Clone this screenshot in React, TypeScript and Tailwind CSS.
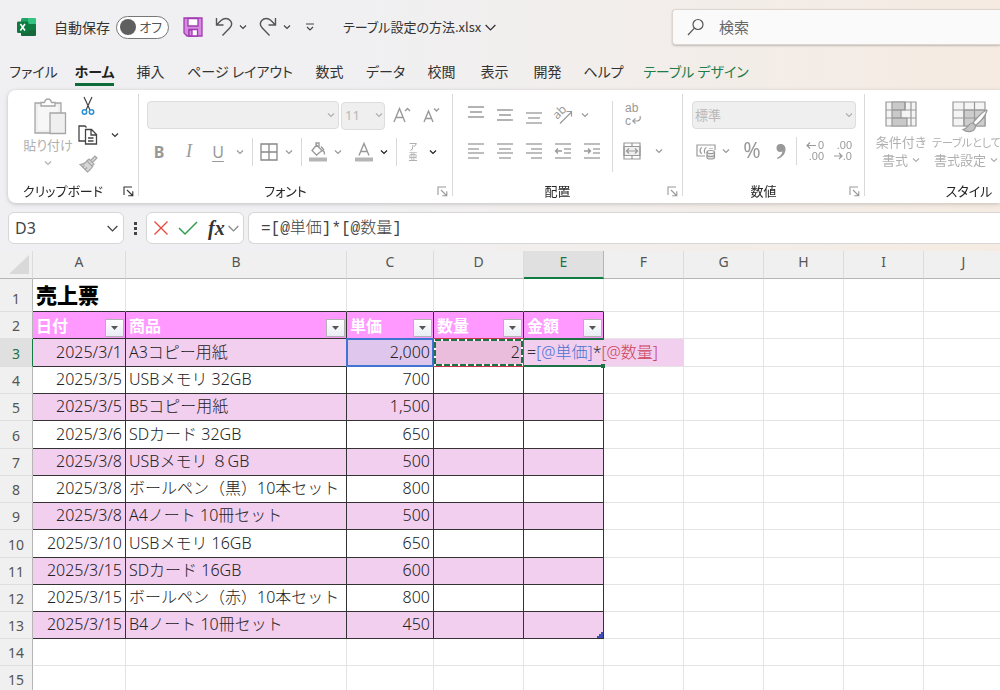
import React from 'react';
import clsx from 'clsx';

type Tab = { name: string; width: string; active?: boolean; contextual?: boolean };

type SheetRow = { no: number; date: string; item: string; price: string; qty?: string; tall?: boolean };

const tabs: Tab[] = [
  { name: 'ファイル', width: 'w-[63px]' },
  { name: 'ホーム', width: 'w-[59px]', active: true },
  { name: '挿入', width: 'w-[53px]' },
  { name: 'ページ レイアウト', width: 'w-[126px]' },
  { name: '数式', width: 'w-[53px]' },
  { name: 'データ', width: 'w-[59px]' },
  { name: '校閲', width: 'w-[53px]' },
  { name: '表示', width: 'w-[53px]' },
  { name: '開発', width: 'w-[53px]' },
  { name: 'ヘルプ', width: 'w-[59px]' },
  { name: 'テーブル デザイン', width: 'w-[126px]', contextual: true },
];

const columns = ['A', 'B', 'C', 'D', 'E', 'F', 'G', 'H', 'I', 'J'];

const fields = ['日付', '商品', '単価', '数量', '金額'];

const rows: SheetRow[] = [
  { no: 3, date: '2025/3/1', item: 'A3コピー用紙', price: '2,000', qty: '2', tall: true },
  { no: 4, date: '2025/3/5', item: 'USBメモリ 32GB', price: '700' },
  { no: 5, date: '2025/3/5', item: 'B5コピー用紙', price: '1,500' },
  { no: 6, date: '2025/3/6', item: 'SDカード 32GB', price: '650', tall: true },
  { no: 7, date: '2025/3/8', item: 'USBメモリ ８GB', price: '500' },
  { no: 8, date: '2025/3/8', item: 'ボールペン（黒）10本セット', price: '800' },
  { no: 9, date: '2025/3/8', item: 'A4ノート 10冊セット', price: '500' },
  { no: 10, date: '2025/3/10', item: 'USBメモリ 16GB', price: '650', tall: true },
  { no: 11, date: '2025/3/15', item: 'SDカード 16GB', price: '600' },
  { no: 12, date: '2025/3/15', item: 'ボールペン（赤）10本セット', price: '800' },
  { no: 13, date: '2025/3/15', item: 'B4ノート 10冊セット', price: '450' },
];

const Chevron: React.FC<{ className?: string; size?: number }> = ({ className, size = 8 }) => (
  <svg width={size} height={size} viewBox="0 0 8 8" fill="none" stroke="currentColor" strokeWidth={size > 8 ? 0.8 : 1.2} className={clsx('shrink-0', className)}>
    <path d="M1 2.5 4 5.5 7 2.5" />
  </svg>
);

type ToolProps = {
  label: string;
  className?: string;
  children: React.ReactNode;
};

const Tool: React.FC<ToolProps> = ({ label, className, children }) => (
  <button type="button" aria-label={label} className={clsx('flex h-7 shrink-0 items-center justify-center', className)}>
    {children}
  </button>
);

const More: React.FC<{ label: string; className?: string }> = ({ label, className }) => (
  <Tool label={label} className={clsx('w-4', className)}>
    <Chevron />
  </Tool>
);

const Divider = () => <span className="mx-1 h-7 w-px shrink-0 bg-[#d9d9d9]" />;

const GroupDivider = () => <span className="mt-1 mb-[7px] w-px shrink-0 bg-[#d9d9d9]" />;

type GroupProps = {
  name: string;
  width: string;
  launcher?: string;
  children: React.ReactNode;
};

const Group: React.FC<GroupProps> = ({ name, width, launcher, children }) => (
  <section className={clsx('flex shrink-0 flex-col', width)}>
    <div className="h-[89px]">{children}</div>
    <div className="flex h-6 items-center text-[#262626]">
      <h2 className="flex-1 text-center text-[13px] leading-5">{name}</h2>
      {launcher && (
        <button type="button" aria-label={`${name}の設定`} className={clsx('flex w-5 justify-center', launcher)}>
          <svg width="11" height="11" viewBox="0 0 11 11" fill="none" stroke="currentColor" strokeWidth="1.1">
            <path d="M1 9V1h8M4 4l5.5 5.5M9.8 5.2v4.6H5.2" />
          </svg>
        </button>
      )}
    </div>
  </section>
);

// horizontal strokes given as [x, y, length]
const Lines: React.FC<{ strokes: number[][]; children?: React.ReactNode }> = ({ strokes, children }) => (
  <svg width="18" height="20" viewBox="0 0 18 20" fill="none" stroke="currentColor" strokeWidth="1.3">
    {strokes.map(([x, y, w]) => (
      <path key={y} d={`M${x} ${y}h${w}`} />
    ))}
    {children}
  </svg>
);

const TitleBar = () => (
  <header className="flex h-[54px] items-center">
    <svg width="20" height="20" viewBox="0 0 20 20" className="ml-[17px] shrink-0">
      <rect x="4" y="1" width="15" height="18" rx="1.5" fill="#21a366" />
      <path d="M11 1h6.5A1.5 1.5 0 0 1 19 2.500V7h-8z" fill="#33c481" />
      <path d="M11 7h8v6h-8z" fill="#107c41" />
      <path d="M4 7h7v6H4z" fill="#185c37" />
      <path d="M4 13h15v4.500a1.500 1.500 0 0 1-1.500 1.500h-12A1.500 1.500 0 0 1 4 17.500z" fill="#17693c" />
      <rect x="0" y="4.500" width="11.500" height="11.500" rx="1.300" fill="#0f7a40" />
      <path d="M3.400 7l4.600 6.500M8 7l-4.600 6.500" stroke="#fff" strokeWidth="1.600" />
    </svg>
    <label className="ml-[17px] flex shrink-0 items-center gap-[6px] text-[14px] text-[#333]">
      自動保存
      <input type="checkbox" role="switch" className="peer sr-only" />
      <span className="flex h-[23px] w-[53px] items-center justify-between rounded-full border border-[#777] bg-white pr-[6px] pl-[3px] text-[13px] text-[#555]">
        <span className="size-4 rounded-full bg-[#5f5f5f]" />
        オフ
      </span>
    </label>
    <button type="button" aria-label="上書き保存" className="ml-[14px]">
      <svg width="20" height="20" viewBox="0 0 20 20" fill="#d48be0" stroke="#a33bb3" strokeWidth="1.300">
        <path d="M1 1h18v18H4l-3-3z" />
        <path d="M5 1.500h10V9H5z" fill="#fff" />
        <path d="M6 12.500h8.500V19H6z" fill="#fff" />
        <path d="M6 13h3v6H6z" />
      </svg>
    </button>
    <button type="button" aria-label="元に戻す" className="ml-3 text-[#555]">
      <svg width="18" height="20" viewBox="0 0 18 20" fill="none" stroke="currentColor" strokeWidth="1.400">
        <path d="M1.500 1v7h7M1.800 7.700 6 3.500C9 .8 13 1 15 3.300c2.200 2.400 1.800 5.500-.3 7.700L7.500 18.500" />
      </svg>
    </button>
    <button type="button" aria-label="元に戻す履歴" className="ml-[6px] text-[#444]">
      <Chevron />
    </button>
    <button type="button" aria-label="やり直し" className="ml-3 text-[#555]">
      <svg width="18" height="20" viewBox="0 0 18 20" fill="none" stroke="currentColor" strokeWidth="1.400">
        <path d="M16.500 1v7h-7M16.200 7.700 12 3.500C9 .8 5 1 3 3.300.8 5.700 1.200 8.800 3.300 11l7.200 7.500" />
      </svg>
    </button>
    <button type="button" aria-label="やり直し履歴" className="ml-[6px] text-[#444]">
      <Chevron />
    </button>
    <button type="button" aria-label="クイック アクセス ツール バーのカスタマイズ" className="ml-[14px] text-[#444]">
      <svg width="10" height="10" viewBox="0 0 10 10" fill="none" stroke="currentColor" strokeWidth="1.200">
        <path d="M1 2h8M2 5l3 3 3-3" />
      </svg>
    </button>
    <button type="button" className="ml-[28px] flex w-[154px] shrink-0 items-center justify-between text-[13px] whitespace-nowrap text-[#333]">
      テーブル設定の方法.xlsx
      <Chevron size={13} />
    </button>
    <label className="ml-[175px] flex h-9 flex-1 items-center gap-[14px] rounded-l border border-r-0 border-[#ddd5d0] bg-[#fbfafa] pl-[14px] text-[#555] shadow-[0_1px_2px_rgba(0,0,0,0.22)]">
      <svg width="18" height="18" viewBox="0 0 18 18" fill="none" stroke="currentColor" strokeWidth="1.200" className="shrink-0">
        <circle cx="11" cy="6.500" r="5" />
        <path d="M7.400 10.200 1 17" />
      </svg>
      <input type="search" aria-label="検索" placeholder="検索" className="w-full min-w-0 bg-transparent text-[15px] outline-none placeholder:text-[#666]" />
    </label>
  </header>
);

const TabBar = () => (
  <nav className="flex h-9 pl-[2px] text-[14px] text-[#333]">
    {tabs.map((tab) => (
      <a
        key={tab.name}
        href="#"
        className={clsx(
          'flex shrink-0 justify-center whitespace-nowrap',
          tab.width,
          tab.active && 'font-bold text-[#222]',
          tab.contextual && 'text-[#1d7c48]'
        )}
      >
        <span className={clsx('h-8 border-b-3 leading-[35px]', tab.active ? 'border-[#0f6b37]' : 'border-transparent')}>{tab.name}</span>
      </a>
    ))}
  </nav>
);

const ClipboardGroup = () => (
  <Group name="クリップボード" width="w-[130px]" launcher="text-[#333]">
    <div className="flex pt-[2px] pl-[13px] text-[#a6a6a6]">
      <button type="button" className="mt-[6px] flex w-[54px] flex-col items-center text-[13px] leading-5 whitespace-nowrap text-[#b0b0b0]">
        <svg width="34" height="37" viewBox="0 0 34 37" fill="#efefef" stroke="#a6a6a6" strokeWidth="1.300" className="ml-1">
          <path d="M2 5h26v30H2z" />
          <path d="M5 8h20v24H5z" fill="#f7f7f7" stroke="none" />
          <path d="M8 8V4.500h3.500C12 2 13.500 1 15 1s3 1 3.500 3.500H22V8z" fill="#fff" />
          <path d="M17 15h15.500v20.500H17z" />
        </svg>
        貼り付け
        <Chevron className="mt-1" />
      </button>
      <div className="ml-px flex flex-col gap-px">
        <Tool label="切り取り" className="w-6">
          <svg width="14" height="20" viewBox="0 0 14 20" fill="none" stroke="#444" strokeWidth="1.200">
            <path d="M3 1l6 13M11 1 5 14" />
            <circle cx="3.500" cy="16" r="2.200" stroke="#2e8fd0" strokeWidth="1.500" />
            <circle cx="10.500" cy="16" r="2.200" stroke="#2e8fd0" strokeWidth="1.500" />
          </svg>
        </Tool>
        <Tool label="コピー" className="w-6">
          <svg width="20" height="20" viewBox="0 0 20 20" fill="none" stroke="#444" strokeWidth="1.300">
            <path d="M7 16H1V1h6l1.500 1.500M7.500 4.500h6l5 5V19h-11zM13 4.500V10h5.500M10 13h5.500M10 16h5.500" />
          </svg>
        </Tool>
        <Tool label="書式のコピー/貼り付け" className="w-6">
          <svg width="19" height="18" viewBox="0 0 19 18" fill="#d6d6d6" stroke="currentColor" strokeWidth="1.200">
            <path d="M1 9.500c2.500 0 5-1 7.500-4L14 11c-2 3-4 5-5.500 6z" />
            <path d="M8 6l2-2 5 5-2 2zM11.500 5.500l4.500-4.500 2 2-4.500 4.500M3.500 12l2-1.500M6 14.500l2-2" />
          </svg>
        </Tool>
      </div>
      <More label="コピーのオプション" className="mt-[29px] ml-[7px] text-[#333]" />
    </div>
  </Group>
);

const FontGroup = () => (
  <Group name="フォント" width="w-[313px]" launcher="text-[#999]">
    <div className="flex flex-col gap-2 pt-[11px] pl-[5px] text-[#999]">
      <div className="flex pl-[3px]">
        <div className="relative w-48">
          <select aria-label="フォント名" className="h-7 w-full appearance-none rounded border border-[#ddd] bg-[#efefef]" />
          <Chevron className="absolute top-[10px] right-1 text-[#b0b0b0]" />
        </div>
        <div className="relative ml-[2px] w-11">
          <select aria-label="フォント サイズ" className="h-7 w-full appearance-none rounded border border-[#ddd] bg-[#efefef] pl-[3px] font-['Noto_Sans',sans-serif] text-[13px] text-[#b8b8b8]">
            <option>11</option>
          </select>
          <Chevron className="absolute top-[10px] right-[2px] text-[#b0b0b0]" />
        </div>
        <Tool label="フォント サイズの拡大" className="ml-[2px] w-[29px]">
          <svg width="18" height="18" viewBox="0 0 18 18" fill="none" stroke="currentColor" strokeWidth="1.400">
            <path d="M1 16 6.500 2.500 12 16M3 11.500h7M12 5l2.500-2.500L17 5" />
          </svg>
        </Tool>
        <Tool label="フォント サイズの縮小" className="w-[29px]">
          <svg width="18" height="18" viewBox="0 0 18 18" fill="none" stroke="currentColor" strokeWidth="1.400">
            <path d="M2 16 6.500 5 11 16M3.500 12.500h6M12 2.500 14.500 5 17 2.500" />
          </svg>
        </Tool>
      </div>
      <div className="flex font-['Noto_Sans',sans-serif] text-[16px]">
        <Tool label="太字" className="w-[30px] font-bold">B</Tool>
        <Tool label="斜体" className="w-[30px] font-['Liberation_Serif',serif] text-[18px] italic">I</Tool>
        <Tool label="下線" className="w-7 underline underline-offset-3">U</Tool>
        <More label="下線の種類" />
        <Divider />
        <Tool label="罫線" className="w-6">
          <svg width="18" height="18" viewBox="0 0 18 18" fill="none" stroke="#888" strokeWidth="1.300">
            <path d="M1 1h16v16H1zM9 1v16M1 9h16" />
          </svg>
        </Tool>
        <More label="罫線の種類" />
        <Divider />
        <Tool label="塗りつぶしの色" className="w-6">
          <svg width="20" height="20" viewBox="0 0 20 20" fill="none" stroke="currentColor" strokeWidth="1.300">
            <path d="M8.500 3 14 8.500 8.500 13 4 8.500zM8 3.500V1h3v4.500M14 8.500c1.500 0 2.500 1.500 2.500 4M13 4.500l3 3.500" />
            <path d="M1 17.500h18" stroke="#b5b5b5" strokeWidth="4" />
          </svg>
        </Tool>
        <More label="塗りつぶしの色の選択" />
        <Tool label="フォントの色" className="ml-[6px] w-6">
          <svg width="20" height="20" viewBox="0 0 20 20" fill="none" stroke="currentColor" strokeWidth="1.400">
            <path d="M5 13.500 10 1.500l5 12M6.800 9.500h6.400" />
            <path d="M1 17.500h18" stroke="#b5b5b5" strokeWidth="4" />
          </svg>
        </Tool>
        <More label="フォントの色の選択" className="text-[#222]" />
        <Divider />
        <Tool label="ふりがなの表示/非表示" className="w-6">
          <span className="w-[10px] font-['Noto_Sans_CJK_JP',sans-serif] text-[9px] leading-[10px] break-all [font-feature-settings:normal]">ア亜</span>
        </Tool>
        <More label="ふりがなのオプション" className="text-[#222]" />
      </div>
    </div>
  </Group>
);

const AlignGroup = () => (
  <Group name="配置" width="w-[229px]" launcher="text-[#999]">
    <div className="flex pt-[11px] pl-2 text-[#999]">
      <div className="flex w-[151px] flex-col gap-2">
        <div className="flex">
          <Tool label="上揃え" className="w-[29px]">
            <Lines strokes={[[1, 2, 16], [3, 7, 12], [1, 12, 16]]} />
          </Tool>
          <Tool label="上下中央揃え" className="w-[29px]">
            <Lines strokes={[[1, 5, 16], [3, 10, 12], [1, 15, 16]]} />
          </Tool>
          <Tool label="下揃え" className="w-[29px]">
            <Lines strokes={[[1, 8, 16], [3, 13, 12], [1, 18, 16]]} />
          </Tool>
          <Tool label="方向" className="w-[29px]">
            <svg width="20" height="20" viewBox="0 0 20 20" fill="none" stroke="currentColor" strokeWidth="1.200" className="overflow-visible">
              <text x="7" y="11" textAnchor="middle" transform="rotate(-45 7 8)" fill="currentColor" stroke="none" className="font-['Noto_Sans',sans-serif] text-[12px]">ab</text>
              <path d="M7 18.500 18.500 7M13.500 6.500h5v5" />
            </svg>
          </Tool>
          <More label="方向のオプション" className="w-3" />
        </div>
        <div className="flex">
          <Tool label="左揃え" className="w-[29px]">
            <Lines strokes={[[1, 3, 16], [1, 8, 11], [1, 12, 16], [1, 17, 11]]} />
          </Tool>
          <Tool label="中央揃え" className="w-[29px]">
            <Lines strokes={[[1, 3, 16], [3, 8, 12], [1, 12, 16], [3, 17, 12]]} />
          </Tool>
          <Tool label="右揃え" className="w-[29px]">
            <Lines strokes={[[1, 3, 16], [6, 8, 11], [1, 12, 16], [6, 17, 11]]} />
          </Tool>
          <Tool label="インデントを減らす" className="w-[29px]">
            <Lines strokes={[[1, 3, 16], [10, 8, 7], [10, 12, 7], [1, 17, 16]]}>
              <path d="M8 10H1.500M4 7.500 1.500 10 4 12.500" />
            </Lines>
          </Tool>
          <Tool label="インデントを増やす" className="w-[29px]">
            <Lines strokes={[[1, 3, 16], [10, 8, 7], [10, 12, 7], [1, 17, 16]]}>
              <path d="M1 10h6.500M5 7.500 7.500 10 5 12.500" />
            </Lines>
          </Tool>
        </div>
      </div>
      <div className="flex h-[71px] flex-col gap-2 border-l border-[#d9d9d9]">
        <Tool label="折り返して全体を表示する" className="w-10">
          <svg width="18" height="24" viewBox="0 0 18 24" fill="none" stroke="currentColor" strokeWidth="1.200" className="overflow-visible">
            <g fill="currentColor" stroke="none" className="font-['Liberation_Sans',sans-serif] text-[12px]">
              <text x="1" y="9">ab</text>
              <text x="1" y="22">c</text>
            </g>
            <path d="M16 13c1 3-.5 5-3 5H9M11.500 15.300 8.800 18l2.700 2.700" />
          </svg>
        </Tool>
        <div className="flex">
          <Tool label="セルを結合して中央揃え" className="w-[38px]">
            <svg width="18" height="18" viewBox="0 0 18 18" fill="none" stroke="currentColor" strokeWidth="1.200">
              <path d="M1 4.500h16v9H1z" fill="#f0f0f0" />
              <path d="M1 1h16v16H1zM9 1v3.500M9 13.500V17M3.500 9h11M6 6.500 3.500 9 6 11.500M12 6.500 14.500 9 12 11.500" />
            </svg>
          </Tool>
          <More label="結合のオプション" />
        </div>
      </div>
    </div>
  </Group>
);

const DecimalIcon: React.FC<{ decrease?: boolean }> = ({ decrease }) => (
  <svg width="20" height="22" viewBox="0 0 20 22" fill="none" stroke="currentColor" strokeWidth="1.200" className="overflow-visible">
    <g fill="currentColor" stroke="none" textAnchor="end" className="font-['Liberation_Sans',sans-serif] text-[11px]">
      <text x="19" y="9">{decrease ? '.00' : '0'}</text>
      <text x="19" y="20">{decrease ? '.0' : '.00'}</text>
    </g>
    {decrease ? <path d="M1 16h8M6 13l3 3-3 3" /> : <path d="M11 5.500H2M5 2.500l-3 3 3 3" />}
  </svg>
);

const NumberGroup = () => (
  <Group name="数値" width="w-[181px]" launcher="text-[#999]">
    <div className="flex flex-col gap-2 pt-[11px] pl-[9px] text-[#999]">
      <div className="relative w-[164px]">
        <select aria-label="表示形式" className="h-7 w-full appearance-none rounded border border-[#ddd] bg-[#efefef] pl-[2px] text-[13px] text-[#b8b8b8]">
          <option>標準</option>
        </select>
        <Chevron className="absolute top-[10px] right-[3px] text-[#b0b0b0]" />
      </div>
      <div className="flex pl-[2px]">
        <Tool label="通貨表示形式" className="w-6">
          <svg width="20" height="18" viewBox="0 0 20 18" fill="none" stroke="currentColor" strokeWidth="1.200">
            <path d="M9 14H1V3h18v5M6 5.500C3.500 6 3.500 11 6 11.500M10.500 5.500C8 6 8 10.500 9 11.500M14 6v1M16 6v1" />
            <path d="M11 10v5.500c0 2 7.500 2 7.500 0V10" fill="#e6e6e6" />
            <ellipse cx="14.750" cy="10" rx="3.750" ry="1.500" fill="#fff" />
            <path d="M11 13c0 2 7.500 2 7.500 0" />
          </svg>
        </Tool>
        <More label="通貨の種類" />
        <Tool label="パーセント スタイル" className="w-9 font-['Noto_Sans',sans-serif] text-[21px]">%</Tool>
        <Tool label="桁区切りスタイル" className="w-[22px]">
          <svg width="10" height="15" viewBox="0 0 10 15" fill="currentColor">
            <path d="M4.500 0a4 4 0 0 0 0 8c.8 0 1.500-.2 2-.5C6 10.500 4 12.500 1 13.800l.4 1.200C6.500 13.500 9.500 9.500 9.500 5c0-3-2-5-5-5z" />
          </svg>
        </Tool>
        <Divider />
        <Tool label="小数点以下の表示桁数を増やす" className="w-7">
          <DecimalIcon />
        </Tool>
        <Tool label="小数点以下の表示桁数を減らす" className="w-7">
          <DecimalIcon decrease />
        </Tool>
      </div>
    </div>
  </Group>
);

const StyleGroup = () => (
  <Group name="スタイル" width="w-52">
    <div className="flex pt-[11px] pl-[5px] text-[13px] leading-[18px] whitespace-nowrap text-[#b0b0b0]">
      <button type="button" className="flex w-[62px] flex-col items-center">
        <svg width="32" height="26" viewBox="0 0 32 26" fill="none" stroke="#999" strokeWidth="1.200" className="mb-[6px]">
          <path d="M1 1h30v24H1z" fill="#f4f4f4" />
          <path d="M7 1h13v8H7zM7 9h9v8H7zM7 17h15v8H7z" fill="#c9c9c9" />
          <path d="M1 9h30M1 17h30M26 1v24M20 1v8" />
        </svg>
        <span>条件付き</span>
        <span className="flex items-center gap-1">書式<Chevron /></span>
      </button>
      <button type="button" className="flex flex-col items-start">
        <svg width="36" height="32" viewBox="0 0 36 32" fill="none" stroke="#999" strokeWidth="1.200" className="ml-5">
          <path d="M1 1h32v24H1z" fill="#f4f4f4" />
          <path d="M12 9h21v16H12z" fill="#cdcdcd" />
          <path d="M1 9h32M1 17h32M12 1v24M22.500 1v24" />
          <path d="M34.500 9c-4 2-11 9-13.500 13l2.500 2.500C28 21 33.500 14.500 35 9.500z" fill="#fff" />
          <path d="M21 22c-5-.5-4 5.500-10 6.500 4 3.500 12.500 3 12.500-4z" fill="#c4c4c4" />
        </svg>
        <span className="text-[11px]">テーブルとして</span>
        <span className="flex items-center gap-1 pl-[2px]">書式設定<Chevron /></span>
      </button>
    </div>
  </Group>
);

const Ribbon = () => (
  <div className="ml-2 flex h-[113px] shrink-0 overflow-hidden rounded-l-lg bg-white">
    <ClipboardGroup />
    <GroupDivider />
    <FontGroup />
    <GroupDivider />
    <AlignGroup />
    <GroupDivider />
    <NumberGroup />
    <GroupDivider />
    <StyleGroup />
  </div>
);

const FormulaBar = () => (
  <div className="mt-[9px] mb-[7px] flex h-8 shrink-0 pl-2">
    <div className="relative w-[116px]">
      <select aria-label="名前ボックス" className="h-8 w-full appearance-none rounded-md border border-[#d6d6d6] bg-white pl-[6px] font-['Noto_Sans',sans-serif] text-[16px] text-[#444]">
        <option>D3</option>
      </select>
      <Chevron size={13} className="absolute top-[10px] right-[5px] text-[#444]" />
    </div>
    <div className="flex w-[22px] flex-col items-center justify-center gap-[2px]">
      <span className="size-[3px] bg-[#444]" />
      <span className="size-[3px] bg-[#444]" />
      <span className="size-[3px] bg-[#444]" />
    </div>
    <div className="flex w-[98px] items-center rounded-md border border-[#d6d6d6] bg-white">
      <button type="button" aria-label="キャンセル" className="ml-[6px]">
        <svg width="16" height="16" viewBox="0 0 16 16" stroke="#e8453c" strokeWidth="1.300">
          <path d="M1.500 1.500l13 13M14.500 1.500l-13 13" />
        </svg>
      </button>
      <button type="button" aria-label="入力" className="ml-[9px]">
        <svg width="20" height="16" viewBox="0 0 20 16" fill="none" stroke="#2f9e4f" strokeWidth="1.500">
          <path d="M1 8l6 6L19 2" />
        </svg>
      </button>
      <button type="button" aria-label="関数の挿入" className="ml-[10px] flex items-center gap-[3px] text-[#333]">
        <span className="w-[16px] font-['Liberation_Serif',serif] text-[20px] leading-6 font-bold italic">fx</span>
        <Chevron size={13} className="text-[#888]" />
      </button>
    </div>
    <input
      type="text"
      aria-label="数式バー"
      defaultValue="=[@単価]*[@数量]"
      className="ml-1 min-w-0 flex-1 rounded-l-md border border-r-0 border-[#d6d6d6] bg-white pt-[2px] pl-3 font-['Liberation_Mono','Noto_Sans_CJK_JP',monospace] text-[16px] font-light text-[#444] outline-none"
    />
  </div>
);

const RowHeader: React.FC<{ no: number; active?: boolean }> = ({ no, active }) => (
  <th
    scope="row"
    className={clsx(
      "border-r border-b border-b-[#dedede] pt-[2px] pb-0 align-bottom text-[14px] leading-6 font-normal",
      active ? 'border-r-[#107c41] bg-[#e0e0e0] text-[#217346]' : 'border-r-[#b5b5b5] bg-[#f0f0f0] text-[#555]'
    )}
  >
    {no}
  </th>
);

// empty grid cells; the last ones of a row run to the sheet's edge
const Blanks: React.FC<{ count: number }> = ({ count }) => (
  <>
    {Array.from({ length: count }, (_, i) => (
      <td key={i} className="border-r border-b border-[#e4e4e4]" />
    ))}
  </>
);

const FormulaEditor: React.FC<{ filled: string }> = ({ filled }) => (
  <div className={clsx('absolute inset-y-0 left-0 z-10 flex w-[160px] items-center pb-[2px] pl-[3px]', filled)}>
    <span className="text-[#333]">=</span>
    <span className="text-[#4a74cf]">[@単価]</span>
    <span className="text-[#333]">*</span>
    <span className="text-[#cc4458]">[@数量]</span>
    <span className="absolute -top-px left-0 h-[2px] w-20 bg-[#1e7145]" />
    <span className="absolute -bottom-px left-0 h-[2px] w-20 bg-[#1e7145]" />
    <span className="absolute -bottom-[2px] left-[77px] size-1 bg-[#1e7145]" />
  </div>
);

const Sheet = () => (
  <div className="min-h-0 flex-1 overflow-hidden bg-white">
    <table className="w-[1004px] table-fixed border-separate border-spacing-0 font-['Noto_Sans','Noto_Sans_CJK_JP',sans-serif] text-[16px] leading-5 font-light whitespace-nowrap text-[#222]">
      <colgroup>
        <col className="w-[33px]" />
        <col className="w-[93px]" />
        <col className="w-[221px]" />
        <col className="w-[87px]" />
        <col className="w-[90px]" />
        <col span={6} className="w-20" />
      </colgroup>
      <thead>
        <tr className="h-7 bg-[#f0f0f0] text-[14px] text-[#555]">
          <td className="border-r border-b border-r-[#dcdcdc] border-b-[#b5b5b5]">
            <svg width="21" height="20" viewBox="0 0 21 20" fill="#d9d9d9" className="ml-[9px]">
              <path d="M20 0v19H0z" />
            </svg>
          </td>
          {columns.map((column) => (
            <th
              key={column}
              scope="col"
              className={clsx(
                'border-r pt-0 font-normal',
                column === 'E'
                  ? 'border-b-2 border-r-[#b5b5b5] border-b-[#107c41] bg-[#e0e0e0] pb-[5px] text-[#217346]'
                  : 'border-b border-r-[#dcdcdc] border-b-[#b5b5b5] pb-[6px]'
              )}
            >
              {column}
            </th>
          ))}
        </tr>
      </thead>
      <tbody>
        <tr className="h-[33px]">
          <RowHeader no={1} />
          <td className="border-r border-b border-r-[#e4e4e4] border-b-[#333] pb-[3px] pl-[3px] font-['Noto_Sans_CJK_JP',sans-serif] text-[21px] font-black text-black">売上票</td>
          {['B', 'C', 'D', 'E'].map((column) => (
            <td key={column} className="border-r border-b border-r-[#e4e4e4] border-b-[#333]" />
          ))}
          <Blanks count={5} />
        </tr>
        <tr className="h-[27px]">
          <RowHeader no={2} />
          {fields.map((field) => (
            <td key={field} className="border-r border-b border-[#333] bg-[#ff99ff] p-0">
              <div className="flex items-end justify-between pl-[3px] font-['Noto_Sans_CJK_JP',sans-serif] font-bold text-white">
                <span className="leading-6">{field}</span>
                <button type="button" aria-label={`${field}のフィルター`} className="mt-[6px] mr-px flex h-[18px] w-[19px] items-center justify-center border border-[#b3b3b3] bg-linear-to-b from-white to-[#e9eef5]">
                  <svg width="7" height="4" viewBox="0 0 7 4" fill="#555">
                    <path d="M0 0h7L3.500 4z" />
                  </svg>
                </button>
              </div>
            </td>
          ))}
          <Blanks count={5} />
        </tr>
        {rows.map((row) => {
          const banded = row.no % 2 === 1;
          const editing = row.no === 3;
          const cell = clsx('relative border-r border-b border-[#333] px-[3px] pt-0 pb-[2px]', banded && 'bg-[#f2ceef]');
          return (
            <tr key={row.no} className={row.tall ? 'h-7' : 'h-[27px]'}>
              <RowHeader no={row.no} active={editing} />
              <td className={clsx(cell, 'text-right')}>{row.date}</td>
              <td className={cell}>{row.item}</td>
              <td className={clsx(cell, 'text-right')}>
                {editing && <span className="absolute -inset-px border-2 border-[#3f74d1] bg-[#8fa8e6]/20" />}
                <span className="relative">{row.price}</span>
              </td>
              <td className={clsx(cell, 'text-right')}>
                {editing && (
                  <span className="absolute -inset-px border border-[#c8384a] bg-[#d98aa8]/25">
                    <svg width="89" height="27" fill="none" strokeWidth="2">
                      <rect x="1" y="1" width="87" height="25" stroke="#fff" />
                      <rect x="1" y="1" width="87" height="25" stroke="#1e7145" strokeDasharray="6 2" />
                    </svg>
                  </span>
                )}
                <span className="relative">{row.qty}</span>
              </td>
              <td className={cell}>
                {editing && <FormulaEditor filled="bg-[#f2ceef]" />}
                {row.no === 13 && (
                  <svg width="6" height="6" viewBox="0 0 6 6" fill="#3b4fb5" className="absolute right-0 bottom-0">
                    <path d="M6 0v6H0V4h2V2h2V0z" />
                  </svg>
                )}
              </td>
              <Blanks count={5} />
            </tr>
          );
        })}
        {[14, 15].map((no) => (
          <tr key={no} className="h-[27px]">
            <RowHeader no={no} />
            <Blanks count={10} />
          </tr>
        ))}
      </tbody>
    </table>
  </div>
);

const App: React.FC = () => {
  return (
    <div className="flex h-screen flex-col overflow-hidden bg-linear-to-r from-[#f0f0f2] from-35% to-[#f5ebe2] font-['Noto_Sans_CJK_JP',sans-serif]">
      <div className="shrink-0 [font-feature-settings:'palt']">
        <TitleBar />
        <TabBar />
        <div className="drop-shadow-[0_1px_2px_rgba(0,0,0,0.2)]">
          <Ribbon />
        </div>
      </div>
      <FormulaBar />
      <Sheet />
    </div>
  );
};

export default App;
